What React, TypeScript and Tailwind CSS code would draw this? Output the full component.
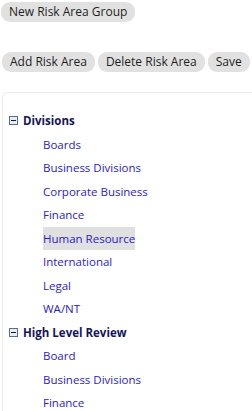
const groups = [
  {
    name: "Divisions",
    items: ["Boards", "Business Divisions", "Corporate Business", "Finance", "Human Resource", "International", "Legal", "WA/NT"],
  },
  {
    name: "High Level Review",
    items: ["Board", "Business Divisions", "Finance"],
  },
];

function Btn({ label }: { label: string }) {
  return (
    <button className="h-[20px] shrink-0 whitespace-nowrap rounded-[9px] bg-[#e1e1e1] px-[8px] text-[12px] leading-[20px] text-[#1e1e1e]">
      {label}
    </button>
  );
}

function MinusBox() {
  return (
    <span className="flex h-[9px] w-[9px] items-center justify-center border border-[#5a6e8c] bg-[#e8ecf2]">
      <span className="h-[1px] w-[5px] bg-[#1a1a1a]" />
    </span>
  );
}

export default function App() {
  const selected = "Human Resource";
  return (
    <div className="h-[411px] w-[252px] overflow-hidden bg-white font-['Open_Sans',sans-serif]">
      <div className="flex pl-[1px] pt-[2px]">
        <Btn label="New Risk Area Group" />
      </div>
      <div className="mt-[30px] flex gap-[3px] pl-[2px]">
        <Btn label="Add Risk Area" />
        <Btn label="Delete Risk Area" />
        <Btn label="Save" />
      </div>
      <div className="ml-[2px] mt-[20px] rounded-tl-[6px] border-l border-t border-[#ececec] pl-[6px] pt-[16px]">
        {groups.map((g) => (
          <div key={g.name}>
            <div className="flex h-[23.5px] items-center gap-[5px]">
              <MinusBox />
              <span className="text-[11.5px] font-bold text-[#15155a]">{g.name}</span>
            </div>
            {g.items.map((it) => (
              <div key={it} className="flex h-[23.5px] items-center pl-[34px]">
                <span
                  className={
                    "text-[11.5px] leading-[23px] text-[#2a1ad0] " +
                    (it === selected && g.name === "Divisions" ? "bg-[#e0e0e0]" : "")
                  }
                >
                  {it}
                </span>
              </div>
            ))}
          </div>
        ))}
      </div>
    </div>
  );
}
